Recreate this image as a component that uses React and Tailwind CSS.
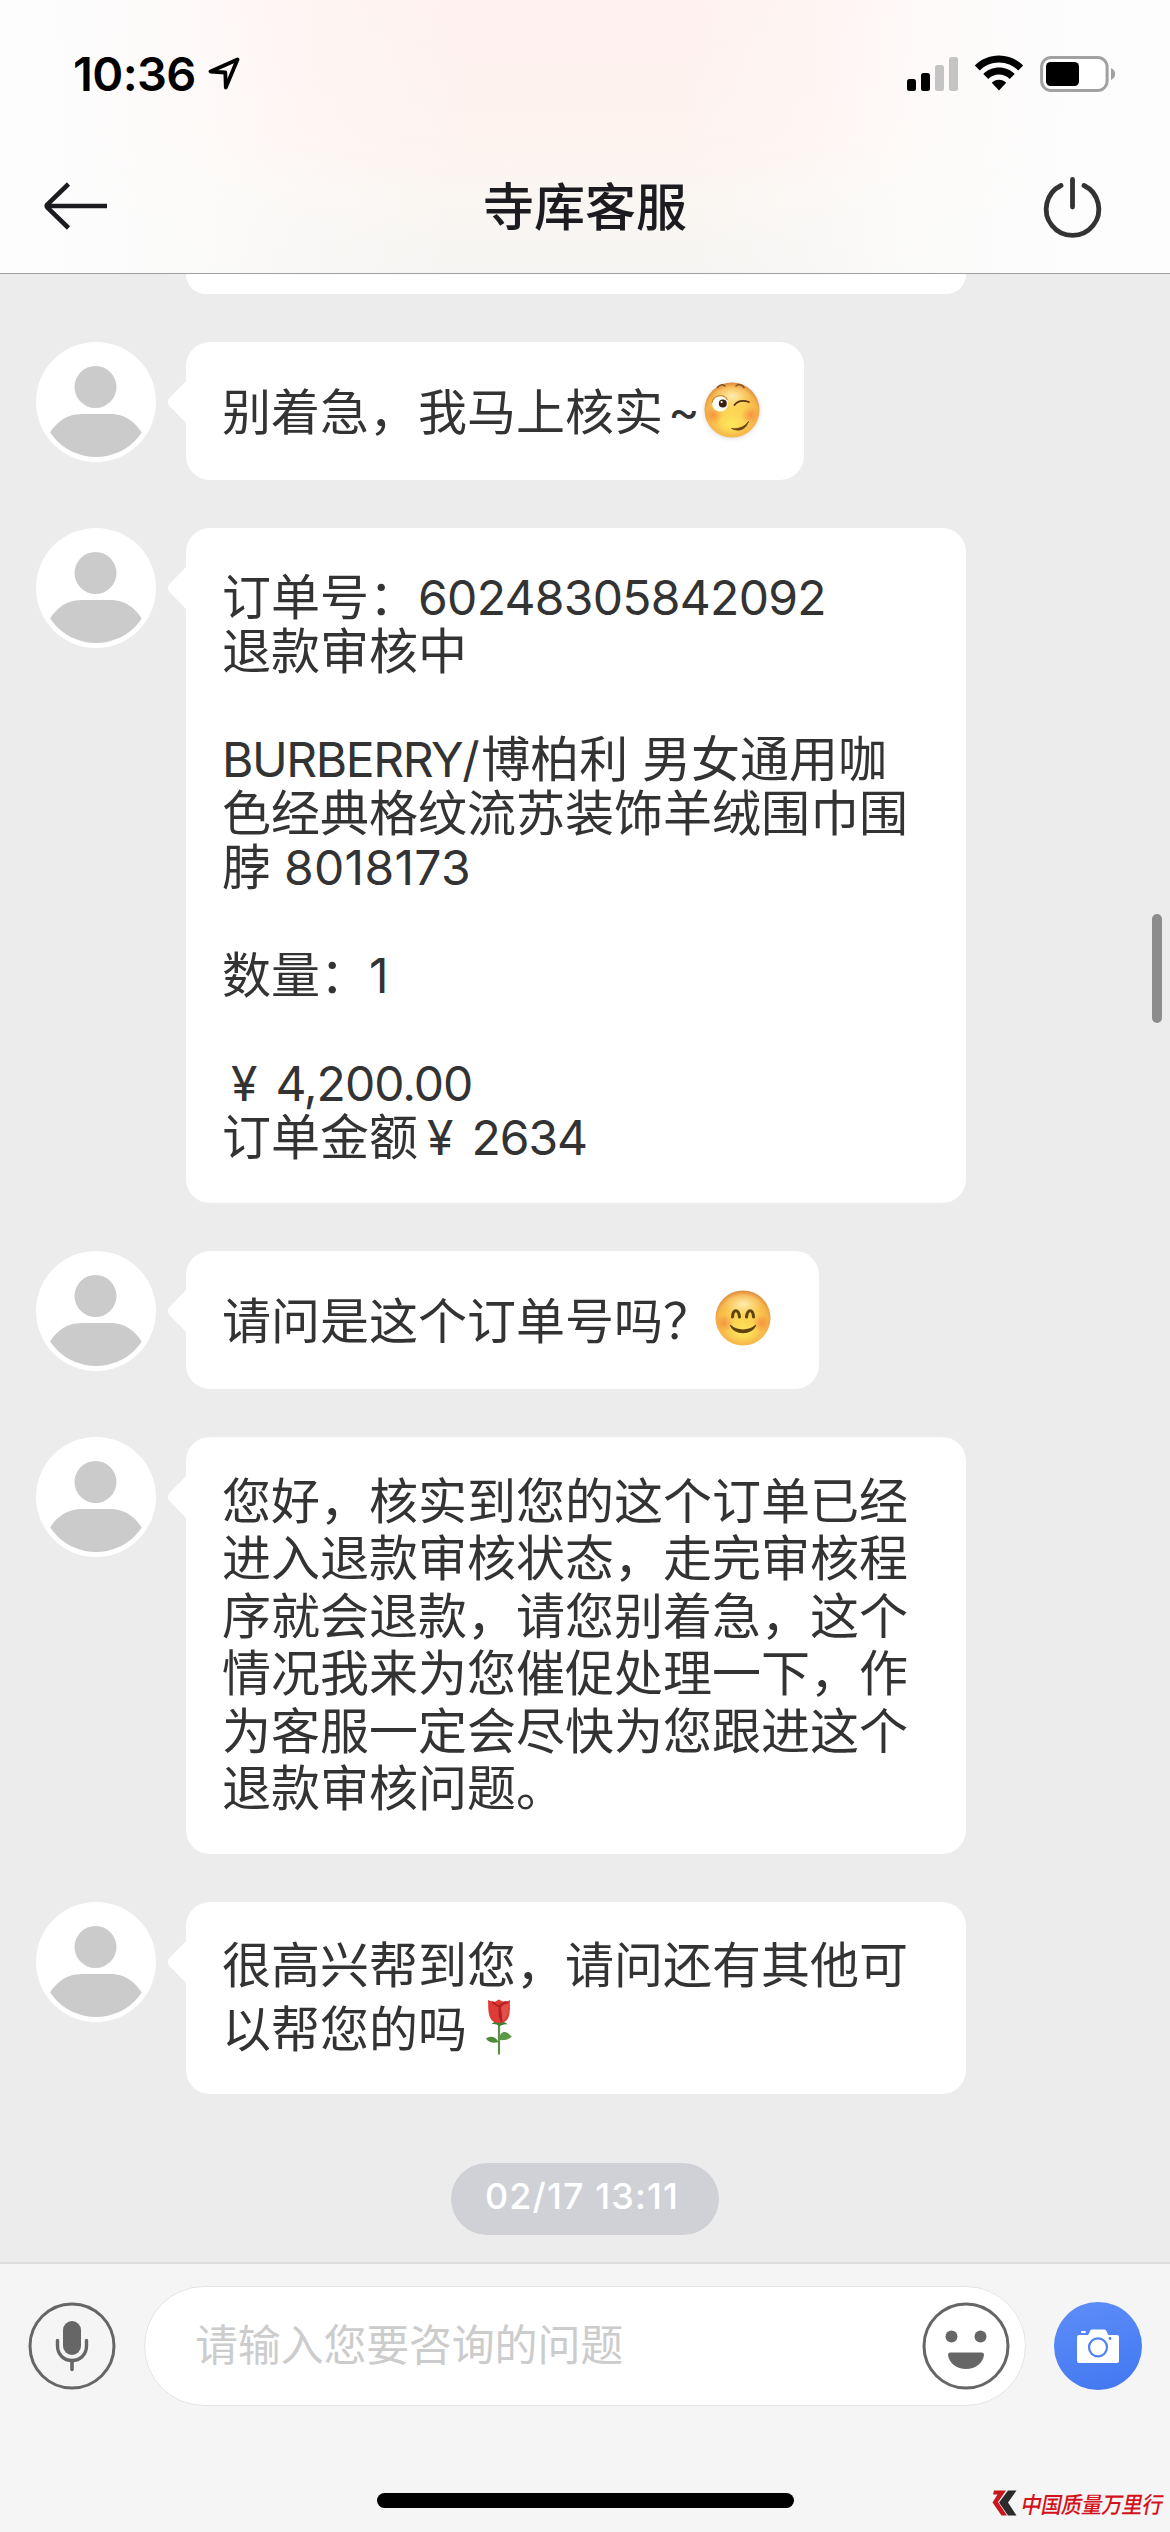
import React from "react";

const Latin = ({ className = "", children }) => (
  <span className={`text-[48px] leading-none ${className}`}>{children}</span>
);

const Avatar = () => (
  <svg viewBox="0 0 120 120" className="size-[120px] shrink-0">
    <defs>
      <clipPath id="avatar-clip">
        <circle cx="60" cy="60" r="55" />
      </clipPath>
    </defs>
    <circle cx="60" cy="60" r="60" fill="#fff" />
    <circle cx="59.5" cy="45" r="21" fill="#cbcbcb" />
    <path
      d="M10 98 C17 83 28 72 46 72 H74 C91 72 102 82 110 98 V120 H10 Z"
      fill="#cbcbcb"
      clipPath="url(#avatar-clip)"
    />
  </svg>
);

const BubbleTail = () => (
  <svg viewBox="0 0 20 44" className="absolute -left-[19px] top-[38px] h-[44px] w-[20px]">
    <path d="M20 0 L2.5 18 Q-0.8 22 2.5 26 L20 44 Z" fill="#fff" />
  </svg>
);

const Message = ({ className, children }) => (
  <div className="flex items-start gap-[30px] pl-[36px]">
    <Avatar />
    <div
      className={`relative rounded-[24px] bg-white pl-[36px] font-[Inter,'Noto_Sans_CJK_SC',sans-serif] text-[49px] text-[#333] ${className}`}
    >
      <BubbleTail />
      {children}
    </div>
  </div>
);

const Line = ({ className = "h-[54px] leading-[54px]", children }) => (
  <div className={`whitespace-pre ${className}`}>{children}</div>
);

const FaceGradient = ({ id }) => (
  <defs>
    <radialGradient id={id} cx="50%" cy="56%" r="56%">
      <stop offset="0" stopColor="#fcd955" />
      <stop offset="0.5" stopColor="#fbcd52" />
      <stop offset="0.82" stopColor="#f6b549" />
      <stop offset="1" stopColor="#de8a40" />
    </radialGradient>
    <radialGradient id={`${id}-shine`} cx="50%" cy="50%" r="50%">
      <stop offset="0" stopColor="#fff3c4" stopOpacity="0.85" />
      <stop offset="1" stopColor="#fde49a" stopOpacity="0" />
    </radialGradient>
    <radialGradient id={`${id}-blush`}>
      <stop offset="0" stopColor="#f4853a" stopOpacity="0.75" />
      <stop offset="1" stopColor="#f4853a" stopOpacity="0" />
    </radialGradient>
    <radialGradient id={`${id}-glow`} cx="50%" cy="50%" r="50%">
      <stop offset="0" stopColor="#fff05e" stopOpacity="0.8" />
      <stop offset="1" stopColor="#ffe95a" stopOpacity="0" />
    </radialGradient>
  </defs>
);

const FaceBase = ({ id }) => (
  <>
    <FaceGradient id={id} />
    <circle cx="28" cy="28" r="27.5" fill={`url(#${id})`} />
    <ellipse cx="28" cy="14" rx="20" ry="12" fill={`url(#${id}-shine)`} />
    <ellipse cx="28" cy="42" rx="17" ry="11" fill={`url(#${id}-glow)`} />
    <circle cx="9.5" cy="33" r="9" fill={`url(#${id}-blush)`} />
    <circle cx="46.5" cy="33" r="9" fill={`url(#${id}-blush)`} />
  </>
);

const WinkFace = () => (
  <svg viewBox="0 0 56 56" className="relative top-[1px] ml-[4px] size-[56px] shrink-0 drop-shadow-sm">
    <FaceBase id="wink" />
    <circle cx="16" cy="21.5" r="8" fill="#fff" />
    <path d="M8 21 A8.300 8.300 0 0 1 23.500 18" fill="none" stroke="#c98b2c" strokeWidth="1.100" />
    <circle cx="18.800" cy="21.500" r="4" fill="#3a2111" />
    <circle cx="17.600" cy="20" r="1.100" fill="#fff" />
    <path d="M30.500 23 C34 18.500 39 18 45 20" fill="none" stroke="#5a3512" strokeWidth="1.800" strokeLinecap="round" />
    <path d="M13.500 5.500 C15.500 2.500 18.500 2 21 4" fill="none" stroke="#7d5220" strokeWidth="1.500" strokeLinecap="round" />
    <path d="M32 4 C34.500 1.800 38 2.200 40 5.500" fill="none" stroke="#7d5220" strokeWidth="1.500" strokeLinecap="round" />
    <path d="M27.500 46.500 C35 47.500 41 44.500 44.500 39.500 C41 49 34 49.500 27.500 46.500 Z" fill="#6a4415" stroke="#6a4415" strokeWidth="0.800" strokeLinejoin="round" />
  </svg>
);

const SmileFace = () => (
  <svg viewBox="0 0 56 56" className="ml-[52px] size-[56px] shrink-0">
    <FaceBase id="smile" />
    <path d="M17.500 27 C18 18.500 23.500 18.500 24.500 27" fill="none" stroke="#5f4310" strokeWidth="3" strokeLinecap="round" />
    <path d="M31.500 27 C32.500 18.500 38 18.500 38.500 27" fill="none" stroke="#5f4310" strokeWidth="3" strokeLinecap="round" />
    <path d="M15.500 35.500 C22 41.500 34 41.500 40.500 35.500 C36 45 20 45 15.500 35.500 Z" fill="#5f4310" stroke="#5f4310" strokeWidth="1.200" strokeLinejoin="round" />
  </svg>
);

const Rose = () => (
  <svg viewBox="0 0 28 56" className="relative -top-[3px] ml-[18px] h-[56px] w-[28px] shrink-0">
    <path d="M14 25 L14 55.500" stroke="#5a8f4c" strokeWidth="2.200" />
    <path d="M13.500 43 C10 36.500 5 37 1 39.500 C4 44 9 44.500 13.500 43 Z" fill="#4d8a3a" />
    <path d="M14.500 41 C14 35 18 32 21.500 33.500 C24 34 25.500 37 27 37.500 C23 41 19 41.500 14.500 41 Z" fill="#5b9a44" />
    <path d="M6 25.500 C9 21 19 21 23 25.500 C19 24.500 17.500 26 14.500 27 C12 25.500 9 24.500 6 25.500 Z" fill="#477a35" />
    <path d="M3 1 C5 2 6 2.500 7.500 2 C10 4 12 1 14 0.500 C17 2.500 18 3 20 2 C22 3 23 2 25 1 C24.500 8 26.500 20 19 23 C14 24.500 9 24 6.500 21 C2.500 15 3.500 8 3 1 Z" fill="#dd3b36" />
    <path d="M14 6 C18 3 20 2.500 23 2.500 C23.500 10 23.500 19 16 23.300 C13 17 13 12 14 6 Z" fill="#b81f22" />
    <path d="M16 8 C18.500 5 21 5 23.500 4.500 C23.800 12 23.500 18 17.500 22.500" fill="#e2504a" />
    <path d="M7.500 3 C9.500 5 12 6.500 14 7.500" fill="none" stroke="#9c1a1d" strokeWidth="1.200" />
  </svg>
);

const StatusBar = () => (
  <div className="flex h-[148px] items-start justify-between pl-[73px] pr-[54px]">
    <div className="flex items-start gap-[12px] pt-[50px]">
      <span className="font-[Inter] text-[47px] font-semibold leading-[48px] tracking-[-0.600px] text-black">10:36</span>
      <svg viewBox="0 0 32 34" className="mt-[6px] h-[34px] w-[32px]" fill="none">
        <path d="M29.500 3.500 L2.500 15.500 L17.300 16.500 L17.800 31.500 Z" stroke="#000" strokeWidth="3.800" strokeLinejoin="round" />
      </svg>
    </div>
    <div className="flex items-start pt-[55px]">
      <svg viewBox="0 0 52 36" className="h-[36px] w-[52px]">
        <rect x="0" y="24" width="9" height="12" rx="2.500" fill="#000" />
        <rect x="14" y="18" width="9" height="18" rx="2.500" fill="#000" />
        <rect x="28" y="10" width="9" height="26" rx="2.500" fill="#c5c4c4" />
        <rect x="42" y="2" width="9" height="34" rx="2.500" fill="#c5c4c4" />
      </svg>
      <svg viewBox="0 0 50 36" className="ml-[15px] h-[36px] w-[50px]">
        <path d="M25 0.500 C15.500 0.500 7 4.300 0.800 10.500 L5.800 15.500 C10.800 10.600 17.500 7.600 25 7.600 C32.500 7.600 39.200 10.600 44.200 15.500 L49.200 10.500 C43 4.300 34.500 0.500 25 0.500 Z" />
        <path d="M25 12.600 C19 12.600 13.400 15 9.300 19 L14.300 24 C17.100 21.300 20.900 19.600 25 19.600 C29.100 19.600 32.900 21.300 35.700 24 L40.700 19 C36.600 15 31 12.600 25 12.600 Z" />
        <path d="M25 24.800 C22.200 24.800 19.700 25.900 17.800 27.700 L25 35.500 L32.200 27.700 C30.300 25.900 27.800 24.800 25 24.800 Z" />
      </svg>
      <svg viewBox="0 0 76 38" className="ml-[16px] h-[38px] w-[76px]">
        <rect x="1.600" y="2.500" width="65.500" height="33" rx="9.500" fill="#fff" stroke="#a2a1a1" strokeWidth="3" />
        <rect x="6" y="7" width="33" height="24" rx="4.500" fill="#000" />
        <path d="M71 13 C76.500 15.500 76.500 22.500 71 25 Z" fill="#a2a1a1" />
      </svg>
    </div>
  </div>
);

const TitleBar = () => (
  <div className="flex h-[125px] items-start justify-between pl-[43px] pr-[66px]">
    <svg viewBox="0 0 66 52" className="mt-[32px] h-[52px] w-[66px]" fill="none" stroke="#1c1c20" strokeWidth="4.600">
      <path d="M64 26 H5" />
      <path d="M25.500 4 L4.500 24.300 Q3 26 4.500 27.700 L25.500 48" strokeLinejoin="round" />
    </svg>
    <h1 className="mt-[21px] pl-[21px] text-[51px] font-medium leading-[70px] text-[#1c1c20]">寺库客服</h1>
    <svg viewBox="0 0 64 66" className="mt-[27px] h-[66px] w-[64px]" fill="none" stroke="#333" strokeWidth="4.800" strokeLinecap="round">
      <path d="M21 10.500 A26.300 26.300 0 1 0 44 10.500" />
      <path d="M32.500 4.500 V32" />
    </svg>
  </div>
);

const Header = () => (
  <header className="h-[274px] border-b border-[#a0a0a2] bg-[linear-gradient(to_right,#fdfdfd_4%,#fdfdfdc0_15%,#fdfdfd60_24%,#fdfdfd00_40%,#fdfdfd00_58%,#fdfdfd50_70%,#fdfdfdc0_80%,#fdfdfd_92%),linear-gradient(to_bottom,#fff1ef_0%,#fef3ef_48%,#faf6f2_72%,#f6f5f3_100%)]">
    <StatusBar />
    <TitleBar />
  </header>
);

const MicButton = () => (
  <svg viewBox="0 0 88 88" className="size-[88px] shrink-0" fill="none" stroke="#666">
    <circle cx="44" cy="44" r="42" strokeWidth="3" />
    <rect x="35" y="19" width="18" height="34" rx="9" fill="#666" stroke="none" />
    <path d="M29.500 38.500 V44 C29.500 52.500 36 58.500 44 58.500 C52 58.500 58.500 52.500 58.500 44 V38.500" strokeWidth="3.400" strokeLinecap="round" />
    <path d="M44 59 V67.500" strokeWidth="3.600" strokeLinecap="round" />
  </svg>
);

const SmileButton = () => (
  <svg viewBox="0 0 88 88" className="size-[88px] shrink-0">
    <circle cx="44" cy="44" r="42" fill="none" stroke="#666" strokeWidth="3" />
    <circle cx="29.500" cy="34.500" r="6" fill="#666" />
    <circle cx="58.500" cy="34.500" r="6" fill="#666" />
    <path d="M28.500 50.500 H59.500 Q62 50.500 62 53 C61 61 53.500 67 44 67 C34.500 67 27 61 26 53 Q26 50.500 28.500 50.500 Z" fill="#666" />
  </svg>
);

const CameraButton = () => (
  <svg viewBox="0 0 88 88" className="ml-[28px] size-[88px] shrink-0">
    <defs>
      <linearGradient id="camera-bg" x1="0.300" y1="0" x2="0.600" y2="1">
        <stop offset="0" stopColor="#5c8cf8" />
        <stop offset="1" stopColor="#4479f2" />
      </linearGradient>
    </defs>
    <circle cx="44" cy="44" r="44" fill="url(#camera-bg)" />
    <path
      d="M25 33 H33.500 C35.500 33 35.500 27.500 38 27.500 H50.500 C53 27.500 53 33 55 33 H63 Q65 33 65 35 V59 Q65 61 63 61 H25 Q23 61 23 59 V35 Q23 33 25 33 Z"
      fill="#fff"
    />
    <rect x="27" y="29" width="5" height="2" rx="1" fill="#fff" />
    <circle cx="44" cy="45.300" r="9" fill="none" stroke="#4f82f6" strokeWidth="2.200" />
    <circle cx="56" cy="36.500" r="1.400" fill="#4f82f6" />
  </svg>
);

const Watermark = () => (
  <div className="absolute bottom-[13px] right-[7px] flex h-[32px] items-center gap-[5px]">
    <svg viewBox="0 0 25 26" className="h-[26px] w-[25px]">
      <path d="M2 0.500 H14 L6 12 L15 25.500 H9.500 L0.500 12.500 L5.500 4.500 H1 Z" fill="#c8161d" />
      <path d="M16 0.500 H24.500 L16 12.500 L24.500 25.500 H16 L7 12.500 Z" fill="#2b2b2b" />
    </svg>
    <span className="inline-block -skew-x-12 scale-y-110 text-[20.500px] font-medium leading-[30px] tracking-[-0.300px] text-[#d3121b]">中国质量万里行</span>
  </div>
);

const InputBar = () => (
  <footer className="relative h-[270px] border-t-2 border-[#dedede] bg-[#f5f5f5]">
    <div className="flex items-center pl-[28px] pt-[22px]">
      <MicButton />
      <div className="ml-[28px] flex h-[120px] w-[882px] items-center justify-between rounded-full border border-[#e4e4e4] bg-white pl-[50px] pr-[15px]">
        <span className="-mt-[8px] text-[43px] leading-[60px] tracking-[-0.200px] text-[#ccc]">请输入您要咨询的问题</span>
        <SmileButton />
      </div>
      <CameraButton />
    </div>
    <div className="mx-auto mt-[87px] h-[15px] w-[417px] rounded-full bg-black" />
    <Watermark />
  </footer>
);

export default function App() {
  return (
    <div className="relative flex h-[2532px] w-[1170px] flex-col overflow-hidden bg-[#ececec] font-['Noto_Sans_CJK_SC',sans-serif]">
      <Header />
      <main className="flex flex-1 flex-col gap-[48px] overflow-hidden">
        <div className="ml-[186px] h-[20px] w-[780px] shrink-0 rounded-b-[24px] bg-white" />

        <Message className="h-[138px] w-[618px] pt-[40px]">
          <Line className="flex h-[54px] items-center leading-[54px]">
            <span className="pt-[7px]">别着急，我马上核实</span>
            <Latin className="ml-[5px] pt-[4px]">~</Latin>
            <WinkFace />
          </Line>
        </Message>

        <Message className="h-[675px] w-[780px] pt-[43px]">
          <Line>订单号：<Latin className="tracking-[-0.700px]">60248305842092</Latin></Line>
          <Line>退款审核中</Line>
          <Line> </Line>
          <Line><Latin className="tracking-[-1.400px]">BURBERRY/</Latin><span className="ml-[3px]">博柏利 男女通用咖</span></Line>
          <Line>色经典格纹流苏装饰羊绒围巾围</Line>
          <Line>脖<Latin className="ml-[13px] tracking-[0.300px]">8018173</Latin></Line>
          <Line> </Line>
          <Line>数量：<Latin>1</Latin></Line>
          <Line> </Line>
          <Line><Latin className="ml-[9px]">¥</Latin><Latin className="ml-[18px] tracking-[-1px]">4,200.00</Latin></Line>
          <Line>订单金额<Latin className="ml-[9px]">¥</Latin><Latin className="ml-[18px] tracking-[-1px]">2634</Latin></Line>
        </Message>

        <Message className="h-[138px] w-[633px] pt-[40px]">
          <Line className="flex h-[54px] items-center leading-[54px]">
            <span className="-mr-[49px] pt-[7px]">请问是这个订单号吗？</span>
            <SmileFace />
          </Line>
        </Message>

        <Message className="h-[417px] w-[780px] pt-[36px]">
          {[
            "您好，核实到您的这个订单已经",
            "进入退款审核状态，走完审核程",
            "序就会退款，请您别着急，这个",
            "情况我来为您催促处理一下，作",
            "为客服一定会尽快为您跟进这个",
            "退款审核问题。",
          ].map((text) => (
            <Line key={text} className="h-[57.400px] leading-[57.400px]">{text}</Line>
          ))}
        </Message>

        <Message className="h-[192px] w-[780px] pt-[32px]">
          <Line className="h-[64px] leading-[64px]">很高兴帮到您，请问还有其他可</Line>
          <Line className="flex h-[64px] items-center leading-[64px]">
            <span>以帮您的吗</span>
            <Rose />
          </Line>
        </Message>

        <div className="mx-auto mt-[21px] flex h-[72px] w-[268px] shrink-0 items-center justify-center rounded-full bg-[#d0d1d7] pb-[6px] pr-[6px] font-[Inter] text-[36px] font-medium leading-none tracking-[1.100px] text-white">
          02/17 13:11
        </div>
      </main>
      <InputBar />
      <div className="absolute right-[8px] top-[914px] h-[109px] w-[10px] rounded-full bg-[#8c8c8c]" />
    </div>
  );
}
